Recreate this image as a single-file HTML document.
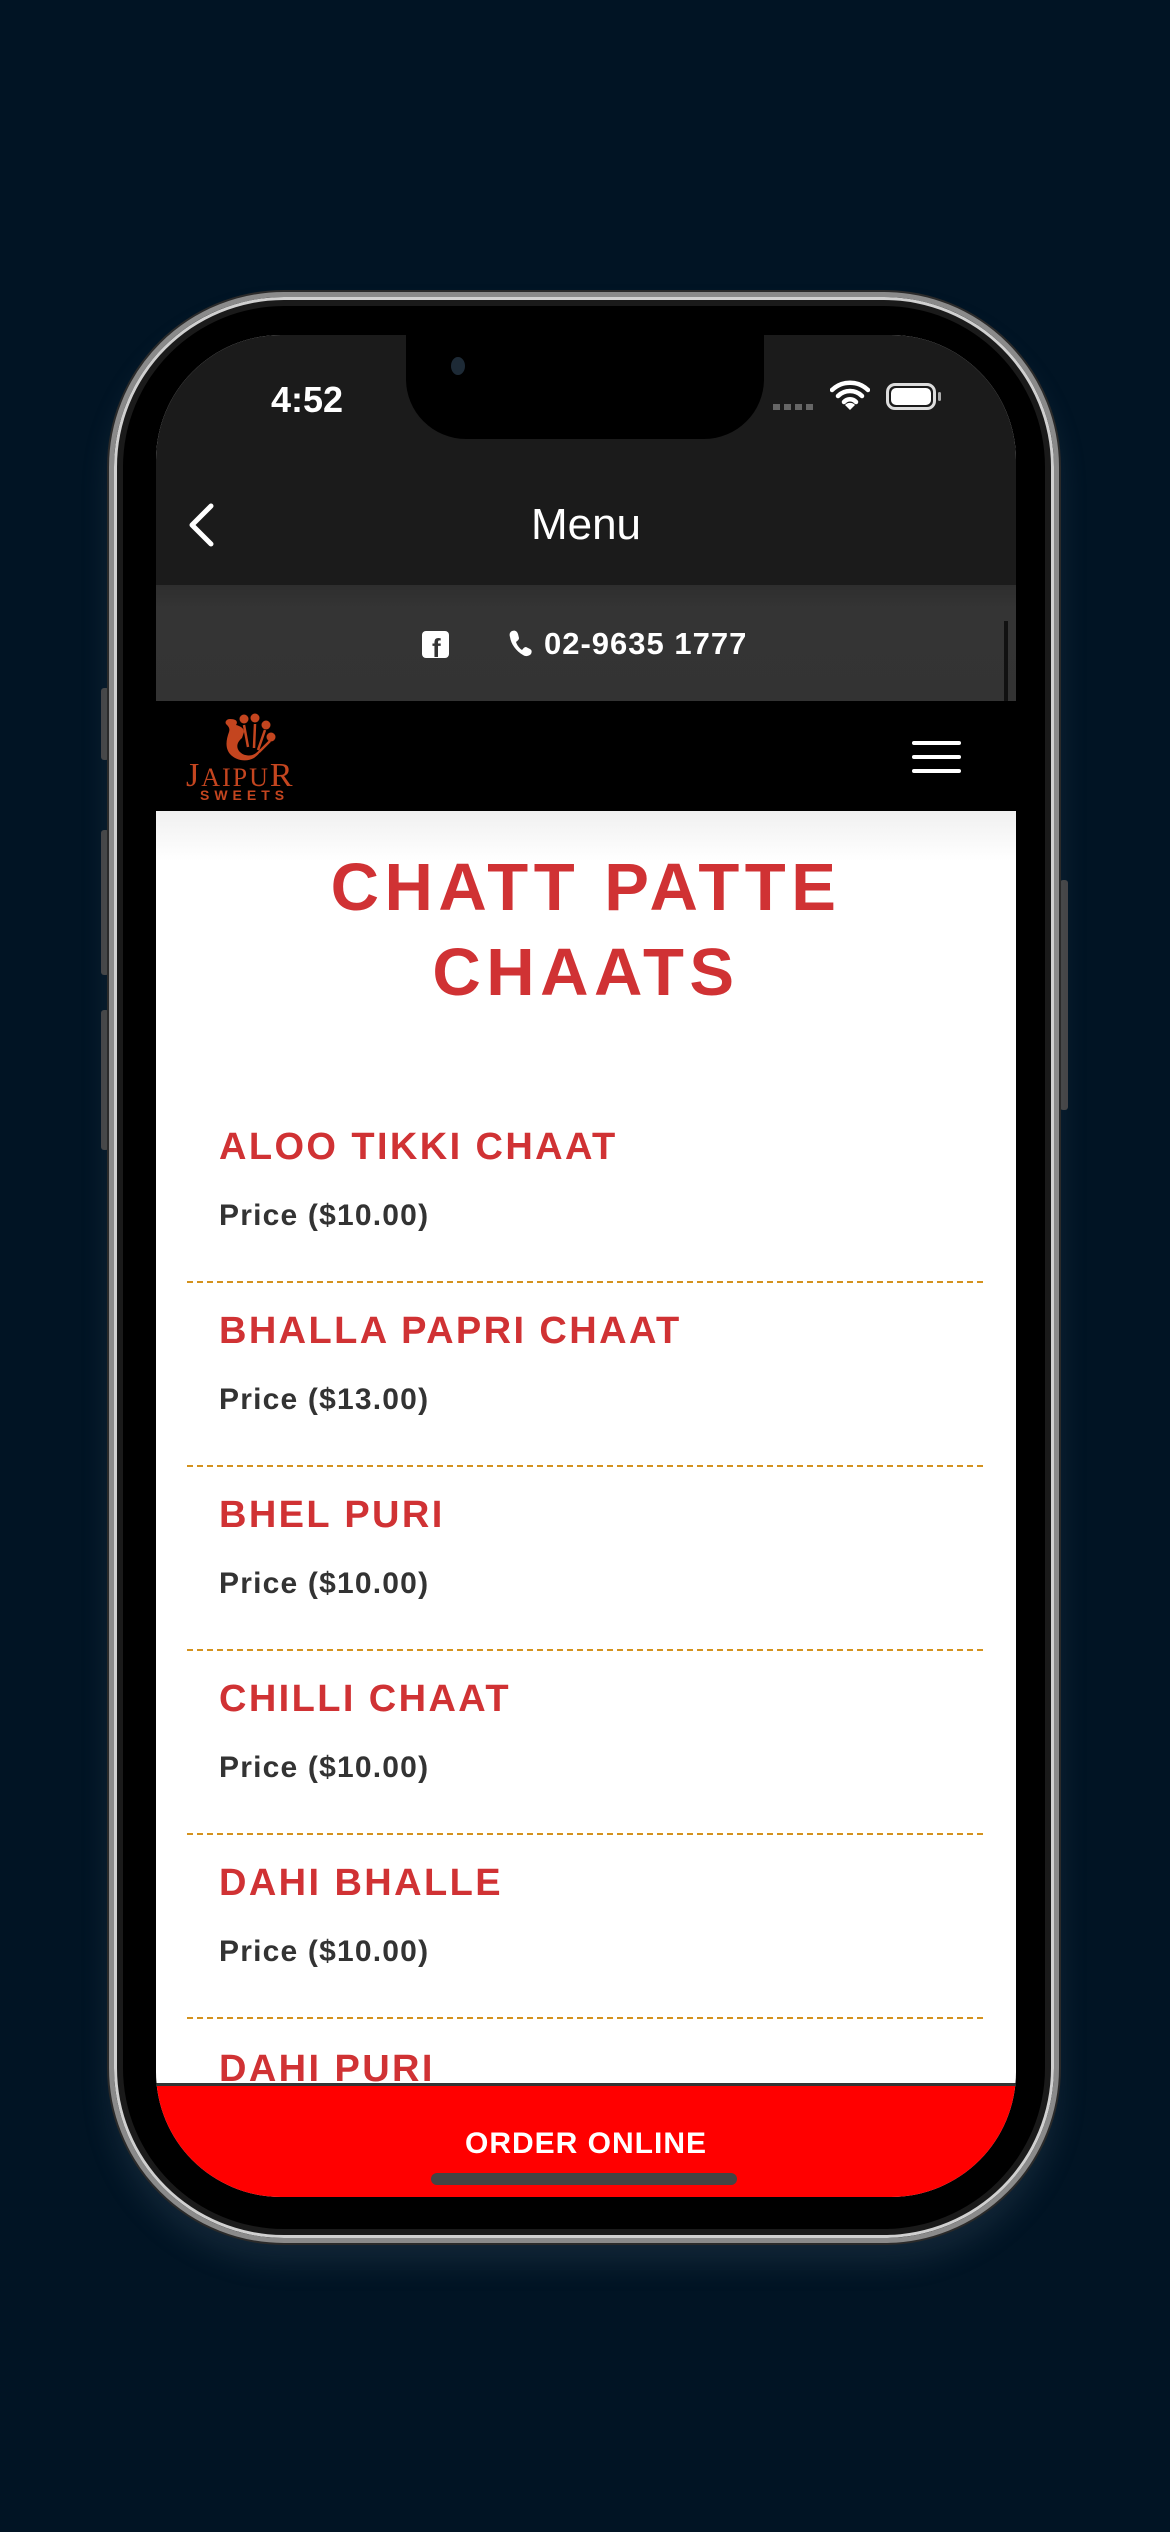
<!DOCTYPE html>
<html><head><meta charset="utf-8"><style>
*{margin:0;padding:0;box-sizing:border-box}
body{width:1170px;height:2532px;background:#011424;position:relative;overflow:hidden;font-family:"Liberation Sans",sans-serif}
.a{position:absolute}
.frame{left:109px;top:292px;width:950px;height:1951px;border-radius:175px;background:#000;border:5px solid #8a8a8a;box-shadow:0 0 0 2px #2a2a2a,inset 0 0 0 3px #d0d0d0,inset 0 0 0 9px #1a1a1a,0 20px 30px rgba(120,140,160,0.15)}
.screen{left:156px;top:335px;width:860px;height:1862px;border-radius:125px;overflow:hidden;background:#fff}
.t{white-space:nowrap;line-height:1}
.h{color:#d03234;font-weight:bold;font-size:67px;letter-spacing:5.5px;width:860px;text-align:center;left:0}
.it{color:#d03234;font-weight:bold;font-size:38px;letter-spacing:2.4px;left:63px}
.pr{color:#333;font-weight:bold;font-size:30px;letter-spacing:1.2px;left:63px}
.dv{left:31px;width:796px;border-top:2px dashed #d4921e}
.btn{background:#444;left:0;width:8px;border-radius:3px}
</style></head><body>
<div class="a btn" style="left:101px;top:688px;height:72px"></div>
<div class="a btn" style="left:101px;top:830px;height:145px"></div>
<div class="a btn" style="left:101px;top:1010px;height:140px"></div>
<div class="a btn" style="left:1060px;top:880px;height:230px"></div>
<div class="a frame"></div>
<div class="a screen">
  <div class="a" style="left:0;top:0;width:860px;height:250px;background:#1b1b1b"></div>
  <div class="a" style="left:250px;top:0;width:358px;height:104px;background:#000;border-radius:0 0 60px 60px"></div>
  <div class="a" style="left:296px;top:60px;width:268px;height:44px;background:#000;border-radius:0 0 30px 30px"></div>
  <div class="a" style="left:295px;top:22px;width:14px;height:18px;border-radius:50%;background:#1d2a36"></div>
  <div class="a t" style="left:115px;top:47px;color:#fff;font-size:36px;font-weight:bold">4:52</div>
  <div class="a" style="left:617px;top:69px;width:42px;height:6px;background:repeating-linear-gradient(90deg,#666 0 7px,transparent 7px 11px)"></div>
  <svg class="a" style="left:674px;top:44px" width="40" height="32" viewBox="0 0 40 32"><path d="M2 11a26 26 0 0 1 36 0M8 17a17 17 0 0 1 24 0M14 23a8 8 0 0 1 12 0" stroke="#fff" stroke-width="4.5" fill="none" stroke-linecap="round"/><path d="M20 31l-5-5a7 7 0 0 1 10 0z" fill="#fff"/></svg>
  <div class="a" style="left:730px;top:48px;width:50px;height:27px;border:3px solid #ddd;border-radius:9px;padding:2px"><div style="width:100%;height:100%;background:#fff;border-radius:5px"></div></div>
  <div class="a" style="left:782px;top:57px;width:3px;height:9px;background:#aaa;border-radius:2px"></div>
  <svg class="a" style="left:31px;top:168px" width="28" height="44" viewBox="0 0 28 44"><path d="M24 3L5 22l19 19" stroke="#fff" stroke-width="5" fill="none" stroke-linecap="round" stroke-linejoin="round"/></svg>
  <div class="a t" style="left:0;width:860px;text-align:center;top:168px;color:#fff;font-size:44px">Menu</div>
  <div class="a" style="left:0;top:250px;width:860px;height:116px;background:linear-gradient(#2e2e2e,#343434 20%,#333)"></div>
  <div class="a" style="left:848px;top:286px;width:4px;height:80px;background:#111"></div>
  <div class="a" style="left:266px;top:296px;width:27px;height:27px;background:#fff;border-radius:4px;overflow:hidden"><span style="position:absolute;left:10px;top:4px;color:#333;font-weight:bold;font-size:26px;line-height:1">f</span></div>
  <svg class="a" style="left:352px;top:294px" width="24" height="28" viewBox="0 0 24 28"><path d="M4 2c3-1 5 0 6 3l1 4c0 2-2 3-3 4 1 3 3 6 6 8 1-1 2-3 4-3l4 2c2 1 2 3 1 5-2 2-5 3-8 1C8 22 3 15 2 8 1 5 2 3 4 2z" fill="#fff"/></svg>
  <div class="a t" style="left:388px;top:293px;color:#fff;font-size:31px;font-weight:bold;letter-spacing:1px">02-9635 1777</div>
  <div class="a" style="left:0;top:366px;width:860px;height:110px;background:#000"></div>
  <svg class="a" style="left:64px;top:376px" width="56" height="52" viewBox="0 0 56 52"><g fill="#c4451f"><circle cx="24" cy="8" r="4.5"/><circle cx="35" cy="7" r="4.5"/><circle cx="46" cy="14" r="4.5"/><circle cx="51" cy="26" r="4.5"/><path d="M10 8c-4 0-6 4-3 6 2 2 3 4 2 7-3 8-4 16 1 22 6 7 17 8 24 4 4-3 7-6 8-10l-6 5c-5 4-13 3-17-2-3-4-2-9 3-13l2-6c0-4-4-6-8-7 2-3 1-6-6-6z"/><path d="M24 14l4 22M35 13l-1 24M45 19l-7 20M50 30l-11 11" stroke="#c4451f" stroke-width="2.5"/></g></svg>
  <div class="a t" style="left:30px;top:424px;color:#c4451f;font-family:'Liberation Serif',serif;font-size:34px;letter-spacing:2px">J<span style="font-size:26px">AIPU</span>R</div>
  <div class="a t" style="left:44px;top:453px;color:#c4451f;font-size:14px;font-weight:bold;letter-spacing:5px">SWEETS</div>
  <div class="a" style="left:756px;top:406px;width:49px;height:4px;background:#fff;border-radius:2px"></div>
  <div class="a" style="left:756px;top:420px;width:49px;height:4px;background:#fff;border-radius:2px"></div>
  <div class="a" style="left:756px;top:434px;width:49px;height:4px;background:#fff;border-radius:2px"></div>
  <div class="a" style="left:0;top:476px;width:860px;height:50px;background:linear-gradient(#f0f0f0,#fff)"></div>
  <div class="a t h" style="top:519px">CHATT PATTE</div>
  <div class="a t h" style="top:604px">CHAATS</div>

  <div class="a t it" style="top:793px">ALOO TIKKI CHAAT</div>
  <div class="a t pr" style="top:866px">Price ($10.00)</div>
  <div class="a dv" style="top:946px"></div>
  <div class="a t it" style="top:977px">BHALLA PAPRI CHAAT</div>
  <div class="a t pr" style="top:1050px">Price ($13.00)</div>
  <div class="a dv" style="top:1130px"></div>
  <div class="a t it" style="top:1161px">BHEL PURI</div>
  <div class="a t pr" style="top:1234px">Price ($10.00)</div>
  <div class="a dv" style="top:1314px"></div>
  <div class="a t it" style="top:1345px">CHILLI CHAAT</div>
  <div class="a t pr" style="top:1418px">Price ($10.00)</div>
  <div class="a dv" style="top:1498px"></div>
  <div class="a t it" style="top:1529px">DAHI BHALLE</div>
  <div class="a t pr" style="top:1602px">Price ($10.00)</div>
  <div class="a dv" style="top:1682px"></div>
  <div class="a t it" style="top:1715px">DAHI PURI</div>
  <div class="a" style="left:0;top:1748px;width:860px;height:3px;background:#333"></div>
  <div class="a" style="left:0;top:1751px;width:860px;height:120px;background:#ff0000"></div>
  <div class="a t" style="left:0;width:860px;text-align:center;top:1794px;color:#fff;font-size:30px;font-weight:bold;letter-spacing:1px">ORDER ONLINE</div>
  <div class="a" style="left:275px;top:1838px;width:306px;height:12px;background:#444;border-radius:6px"></div>
</div>
</body></html>
